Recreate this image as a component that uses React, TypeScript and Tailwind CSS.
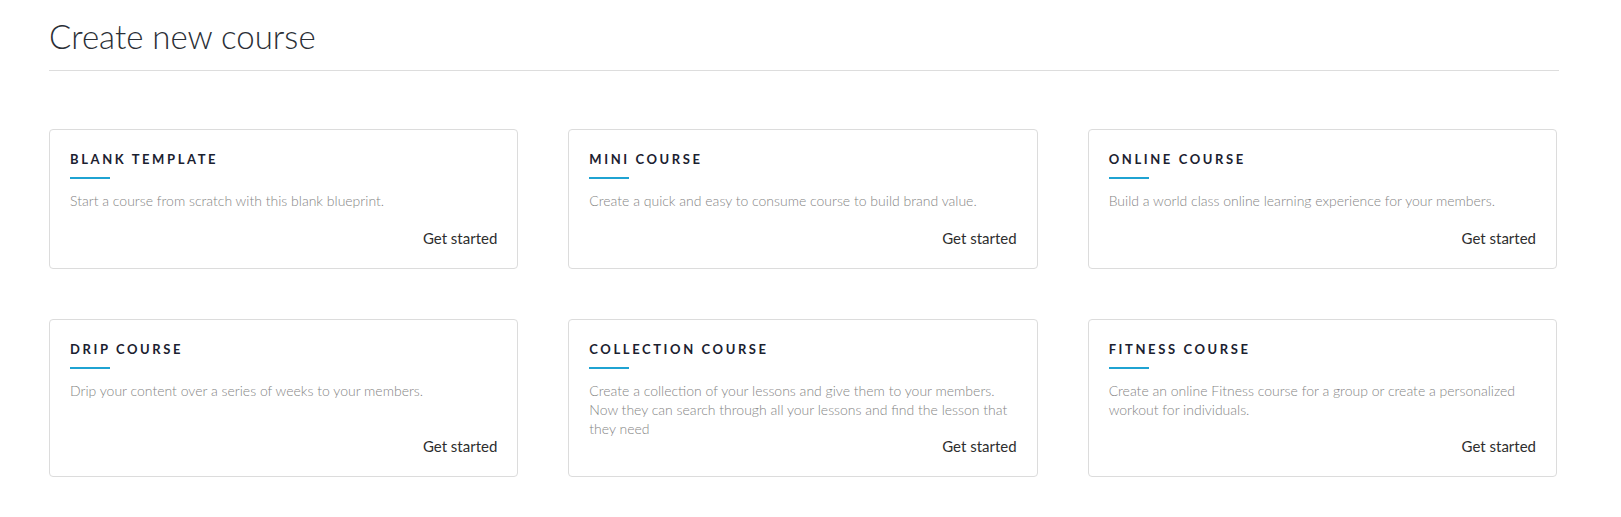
import React from "react";

const cards = [
  { title: "BLANK TEMPLATE", desc: "Start a course from scratch with this blank blueprint." },
  { title: "MINI COURSE", desc: "Create a quick and easy to consume course to build brand value." },
  { title: "ONLINE COURSE", desc: "Build a world class online learning experience for your members." },
  { title: "DRIP COURSE", desc: "Drip your content over a series of weeks to your members." },
  {
    title: "COLLECTION COURSE",
    desc: "Create a collection of your lessons and give them to your members. Now they can search through all your lessons and find the lesson that they need",
  },
  {
    title: "FITNESS COURSE",
    desc: "Create an online Fitness course for a group or create a personalized workout for individuals.",
  },
];

export default function App() {
  return (
    <div
      className="min-h-[517px] w-full bg-white pl-[49px] pt-[14px]"
      style={{ fontFamily: "'Source Sans Pro', Lato, 'Noto Sans', sans-serif" }}
    >
      <div className="w-[1510px]">
        <h1 className="text-[33px] font-light leading-[44px] text-[#2b2f36]">Create new course</h1>
        <div className="mt-[12px] h-px w-full bg-[#dddddd]" />
        <div className="mt-[58px] grid w-[1508px] grid-cols-3 gap-x-[50px] gap-y-[50px]">
          {cards.map((c) => (
            <div
              key={c.title}
              className="flex flex-col rounded-[4px] border border-[#dcdcdc] bg-white px-[20px] pb-[18px] pt-[19px]"
            >
              <div className="text-[13px] font-bold leading-[20px] tracking-[0.2em] text-[#1b2130]">{c.title}</div>
              <div className="mt-[8px] h-[2px] w-[40px] bg-[#1fa3d2]" />
              <p className="mt-[12px] min-h-[39px] text-[14px] font-light leading-[19px] text-[#858585]">{c.desc}</p>
              <div className="mt-auto -translate-y-[2px] self-end text-[15px] font-normal leading-[20px] text-[#2e2e2e]">
                Get started
              </div>
            </div>
          ))}
        </div>
      </div>
    </div>
  );
}
